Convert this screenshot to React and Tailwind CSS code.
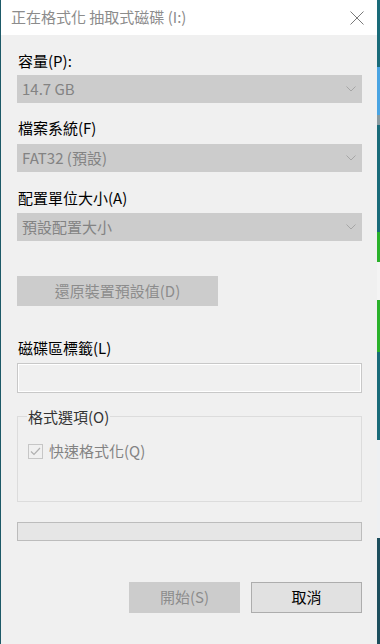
import React from 'react';

const FONT = { fontFamily: '"Segoe UI", "Noto Sans CJK TC", "Noto Sans", sans-serif' };

const Chevron = () => (
    <svg width="10" height="6" viewBox="0 0 10 6" className="shrink-0">
        <path d="M0.5 0.5 L5 5 L9.5 0.5" fill="none" stroke="#a6a6a6" strokeWidth="1" />
    </svg>
);

const Combo = ({ value }) => (
    <div className="flex h-[28px] items-center justify-between bg-[#cccccc] pl-[5px] pr-[6px] text-[#838383]">
        <span>{value}</span>
        <Chevron />
    </div>
);

const Label = ({ children, className = '' }) => (
    <div className={`h-[20px] leading-[20px] text-black ${className}`}>{children}</div>
);

// right edge: the desktop showing behind the dialog
const DESKTOP = [
    ['h-[67px]', 'bg-[#1a6b79]'],
    ['h-[48px]', 'bg-[#4aa4e2]'],
    ['h-[10px]', 'bg-[#8a9aa0]'],
    ['h-[107px]', 'bg-[#1a6b79]'],
    ['h-[30px]', 'bg-[#2bb12b]'],
    ['h-[38px]', 'bg-[#f4f4f4]'],
    ['h-[52px]', 'bg-[#2bb12b]'],
    ['h-[88px]', 'bg-[#1a6b79]'],
    ['h-[98px]', 'bg-[#eef0f2]'],
    ['flex-1', 'bg-[#1d4e5d]'],
];

export default function App() {
    return (
        <div className="flex h-[644px] w-[380px] overflow-hidden text-[15px]" style={FONT}>
            <div className="w-px shrink-0 bg-[#1d5a68]" />
            <div className="flex w-[376px] shrink-0 flex-col bg-[#f0f0f0]">
                {/* title bar */}
                <div className="flex h-[35px] items-center justify-between bg-white pl-[10px] pr-[13px]">
                    <span className="text-[#8c8c8c]">正在格式化 抽取式磁碟 (I:)</span>
                    <svg width="14" height="14" viewBox="0 0 14 14">
                        <path d="M0.5 0.5 L13.5 13.5 M13.5 0.5 L0.5 13.5" stroke="#7a7a7a" strokeWidth="1" />
                    </svg>
                </div>

                <div className="flex flex-col pl-[16px] pr-[15px]">
                    <Label className="mt-[16px] pl-[1px]">容量(P):</Label>
                    <div className="mt-[4px]">
                        <Combo value="14.7 GB" />
                    </div>

                    <Label className="mt-[15px] pl-[1px]">檔案系統(F)</Label>
                    <div className="mt-[6px]">
                        <Combo value="FAT32 (預設)" />
                    </div>

                    <Label className="mt-[16px] pl-[1px]">配置單位大小(A)</Label>
                    <div className="mt-[5px]">
                        <Combo value="預設配置大小" />
                    </div>

                    <button className="mt-[35px] h-[30px] w-[201px] bg-[#cccccc] text-[#8c8c8c]">
                        還原裝置預設值(D)
                    </button>

                    <Label className="mt-[32px] pl-[1px]">磁碟區標籤(L)</Label>
                    <div className="mt-[5px] h-[30px] border border-[#c8c8c8] bg-[#f0f0f0] shadow-[inset_0_0_0_1px_#ffffff]" />

                    <div className="relative mt-[23px] h-[86px] border border-[#dcdcdc]">
                        <span className="absolute -top-[10px] left-[9px] bg-[#f0f0f0] px-px leading-[20px] text-[#333333]">
                            格式選項(O)
                        </span>
                        <div className="ml-[10px] mt-[24px] flex items-center gap-[6px] text-[#838383]">
                            <svg width="15" height="15" viewBox="0 0 15 15" className="shrink-0">
                                <rect x="0.5" y="0.5" width="14" height="14" fill="#f0f0f0" stroke="#c6c6c6" />
                                <path d="M3 7.5 L6 10.5 L12 4" fill="none" stroke="#b0b0b0" strokeWidth="1.2" />
                            </svg>
                            <span className="leading-[20px]">快速格式化(Q)</span>
                        </div>
                    </div>

                    <div className="mt-[20px] h-[19px] border border-[#bcbcbc] bg-[#e6e6e6]" />

                    <div className="mt-[41px] flex justify-end gap-[11px]">
                        <button className="h-[31px] w-[111px] bg-[#cccccc] text-[#8c8c8c]">開始(S)</button>
                        <button className="h-[31px] w-[111px] border border-[#adadad] bg-[#e1e1e1] text-black">
                            取消
                        </button>
                    </div>
                </div>
            </div>
            <div className="flex flex-1 flex-col">
                {DESKTOP.map(([h, bg], i) => (
                    <div key={i} className={`${h} ${bg}`} />
                ))}
            </div>
        </div>
    );
}
